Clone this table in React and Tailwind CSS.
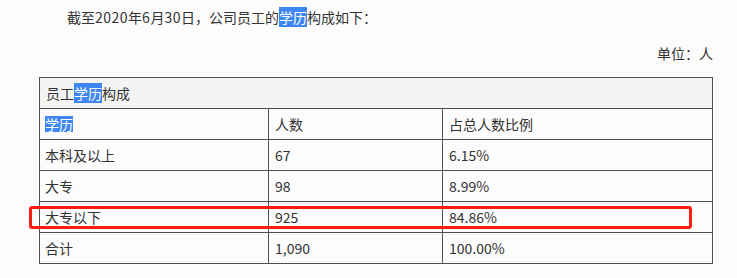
import React from "react";

const rows = [
  ["本科及以上", "67", "6.15%"],
  ["大专", "98", "8.99%"],
  ["大专以下", "925", "84.86%"],
  ["合计", "1,090", "100.00%"],
];

export default function App() {
  return (
    <div
      className="relative w-[737px] h-[278px] overflow-hidden bg-[#fcfcfc] text-[#333333] text-[14px]"
      style={{ fontFamily: '"Noto Sans CJK SC", "Noto Sans", sans-serif' }}
    >
      <p className="pt-[7px] pl-[67px] leading-[20px] h-[27px] whitespace-nowrap">
        截至<span className="tracking-[0.5px]">2020</span>年<span className="tracking-[0.5px]">6</span>月<span className="tracking-[0.5px]">30</span>日，公司员工的
        <span className="inline-block h-[20px] leading-[20px] bg-[#3e86f1] text-white align-top">学历</span>
        构成如下：
      </p>
      <p className="mt-[16px] pr-[24px] text-right leading-[20px] h-[20px]">单位：人</p>
      <div className="ml-[39px] mt-[14px] w-[674px] border-t border-l border-r border-[#505050]">
        <div className="flex items-center h-[31px] border-b border-[#505050] bg-[#f4f4f4] pl-[6px]">
          <span className="leading-[20px]">员工</span>
          <span className="inline-block h-[20px] leading-[20px] bg-[#3e86f1] text-white">学历</span>
          <span className="leading-[20px]">构成</span>
        </div>
        <div className="flex h-[31px] border-b border-[#505050]">
          <div className="w-[229px] border-r border-[#505050] flex items-center pl-[5px]">
            <span className="inline-block h-[16px] leading-[16px] bg-[#3e86f1] text-white">学历</span>
          </div>
          <div className="w-[174px] border-r border-[#505050] flex items-center pl-[6px]">人数</div>
          <div className="flex-1 flex items-center pl-[6px]">占总人数比例</div>
        </div>
        {rows.map((r) => (
          <div key={r[0]} className="flex h-[31px] border-b border-[#505050]">
            <div className="w-[229px] border-r border-[#505050] flex items-center pl-[5px]">{r[0]}</div>
            <div className="w-[174px] border-r border-[#505050] flex items-center pl-[6px]">{r[1]}</div>
            <div className="flex-1 flex items-center pl-[6px]">{r[2]}</div>
          </div>
        ))}
      </div>
      <div className="absolute left-[29px] top-[206px] w-[663px] h-[23px] border-[3px] border-[#ff1a12] rounded-[3px]" />
    </div>
  );
}
